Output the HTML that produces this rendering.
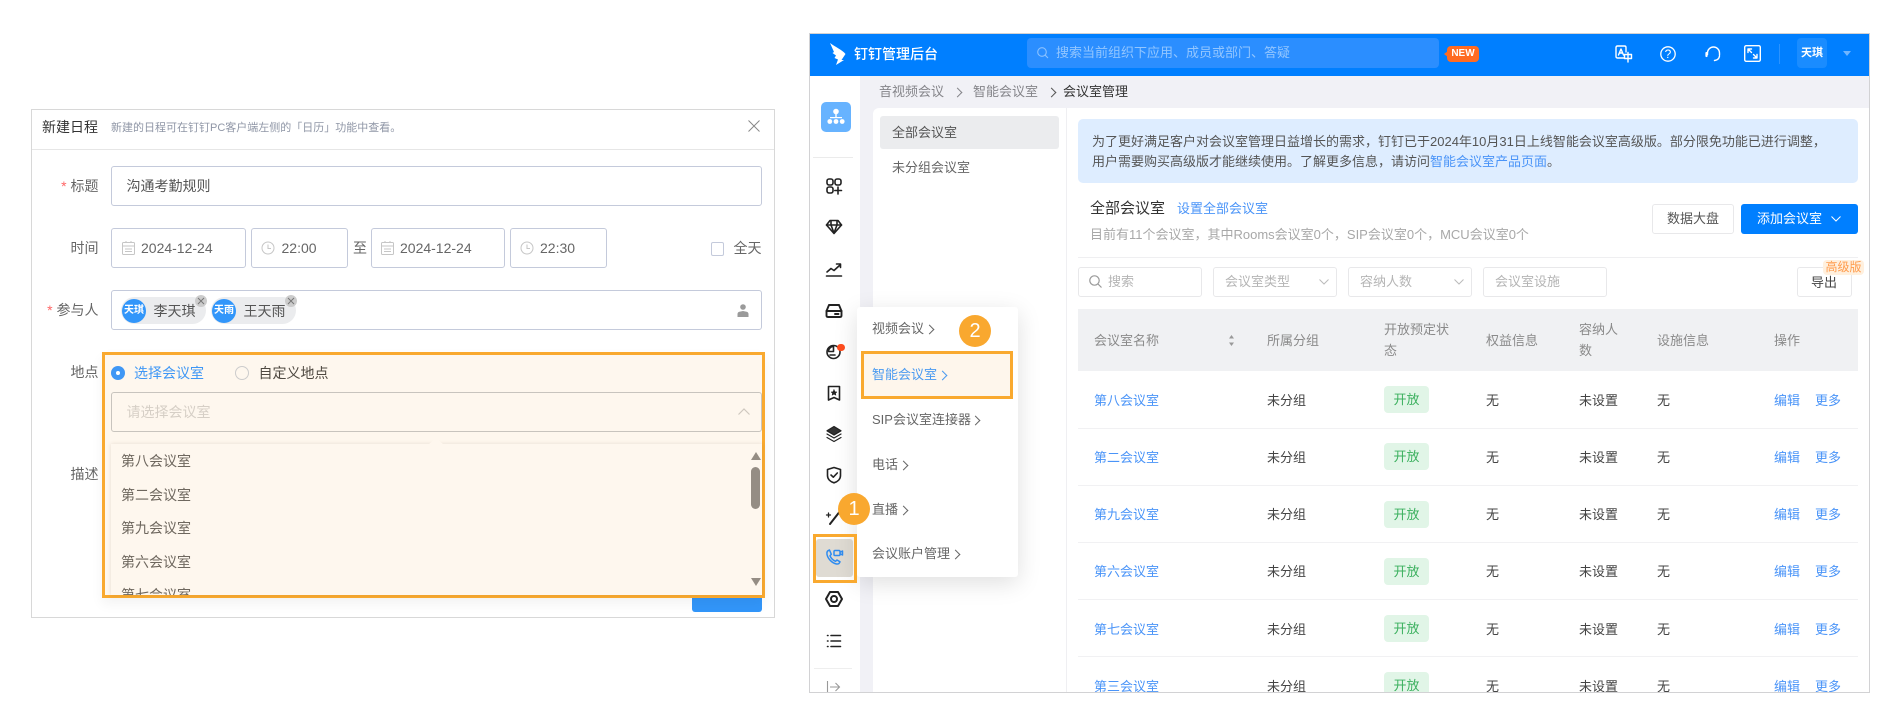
<!DOCTYPE html>
<html lang="zh-CN"><head><meta charset="utf-8"><title>会议室管理</title>
<style>
*{box-sizing:border-box;margin:0;padding:0}
html,body{width:1895px;height:727px;background:#fff;overflow:hidden}
body{position:relative;font-family:"Liberation Sans","Noto Sans CJK SC",sans-serif;font-size:13px;color:#555}
#r{position:absolute;left:0;top:0;width:1895px;height:727px;filter:blur(.35px)}
.a{position:absolute}
.t{position:absolute;white-space:nowrap;line-height:20px;height:20px}
.f14{font-size:14px}
.box{position:absolute;border:1px solid #c4cadb;border-radius:3px;background:#fff}
.c{position:absolute;width:7px;height:7px;border:solid #666;border-width:1.3px 1.3px 0 0;transform:rotate(45deg)}
.fl{position:absolute;top:267px;height:30px;border:1px solid #e8e8ea;border-radius:3px;background:#fff}
svg{position:absolute;overflow:visible}
.i{fill:none;stroke:#222;stroke-width:1.6;stroke-linejoin:round;stroke-linecap:round}
.w{fill:none;stroke:#fff;stroke-width:1.4;stroke-linejoin:round;stroke-linecap:round}
.ln{color:#4a94f8}
.tag{position:absolute;left:1384px;width:45px;height:27px;background:#e1f5e7;border-radius:4px;color:#3bb05e;text-align:center;line-height:27px}
.sep{position:absolute;left:1078px;width:780px;height:1px;background:#f1f1f3}
.num{position:absolute;width:32px;height:32px;border-radius:50%;background:#f9a82f;color:#fff;text-align:center;line-height:32px;font-size:20px}
</style></head><body><div id="r">

<!-- LEFT DIALOG -->
<div class="a" style="left:31px;top:109px;width:744px;height:509px;border:1px solid #d8d8d8;background:#fff"></div>
<div class="a" style="left:32px;top:149px;width:742px;height:1px;background:#e6e6e6"></div>
<div class="t f14" style="left:42px;top:117px;color:#333">新建日程</div>
<div class="t" style="left:111px;top:118px;font-size:11px;color:#8f96a6">新建的日程可在钉钉PC客户端左侧的「日历」功能中查看。</div>
<svg style="left:748px;top:120px" width="12" height="12"><path d="M0.5 .5L11.5 11.5M11.5 .5L.5 11.5" stroke="#888" stroke-width="1" fill="none"/></svg>

<div class="t f14" style="left:60px;top:176px;width:38.500px;text-align:right;color:#666"><span style="color:#f66">*</span> 标题</div>
<div class="box" style="left:111px;top:166px;width:651px;height:40px"></div>
<div class="t f14" style="left:126.500px;top:176px;color:#555">沟通考勤规则</div>

<div class="t f14" style="left:70.500px;top:238px;color:#666">时间</div>
<div class="box" style="left:111px;top:228px;width:134.500px;height:40px"></div>
<div class="box" style="left:251px;top:228px;width:96.500px;height:40px"></div>
<div class="t f14" style="left:353px;top:238px;color:#666">至</div>
<div class="box" style="left:370.500px;top:228px;width:134px;height:40px"></div>
<div class="box" style="left:510px;top:228px;width:96.500px;height:40px"></div>
<svg style="left:121.500px;top:241px" width="13" height="14" fill="none" stroke="#c6c6c6"><rect x=".5" y="1.5" width="12" height="12" rx="1"/><path d="M.5 5h12M3 8h7M3 10.500h7M4 0v2M9 0v2"/></svg>
<svg style="left:380.500px;top:241px" width="13" height="14" fill="none" stroke="#c6c6c6"><rect x=".5" y="1.5" width="12" height="12" rx="1"/><path d="M.5 5h12M3 8h7M3 10.500h7M4 0v2M9 0v2"/></svg>
<svg style="left:261px;top:241px" width="14" height="14" fill="none" stroke="#c6c6c6"><circle cx="7" cy="7" r="6"/><path d="M7 3.500V7.500H10"/></svg>
<svg style="left:520px;top:241px" width="14" height="14" fill="none" stroke="#c6c6c6"><circle cx="7" cy="7" r="6"/><path d="M7 3.500V7.500H10"/></svg>
<div class="t f14" style="left:141px;top:238px;color:#666">2024-12-24</div>
<div class="t f14" style="left:281.500px;top:238px;color:#666">22:00</div>
<div class="t f14" style="left:400px;top:238px;color:#666">2024-12-24</div>
<div class="t f14" style="left:540px;top:238px;color:#666">22:30</div>
<div class="a" style="left:710.500px;top:242px;width:13px;height:14px;border:1px solid #c4cadb;border-radius:2px"></div>
<div class="t f14" style="left:733.500px;top:238px;color:#666">全天</div>

<div class="t f14" style="left:45px;top:300px;width:53.500px;text-align:right;color:#666"><span style="color:#f66">*</span> 参与人</div>
<div class="box" style="left:111px;top:290px;width:651px;height:40px"></div>
<div class="a" style="left:120.500px;top:297px;width:85px;height:27px;border-radius:14px;background:#ebecee"></div>
<div class="a" style="left:122px;top:299px;width:24px;height:24px;border-radius:50%;background:#3296fa;color:#fff;font-size:10px;font-weight:bold;line-height:24px;text-align:center">天琪</div>
<div class="t f14" style="left:153.500px;top:301px;color:#555">李天琪</div>
<div class="a" style="left:195px;top:295px;width:12px;height:12px;border-radius:50%;background:#ccc"></div>
<svg style="left:198px;top:298px" width="6" height="6"><path d="M0 0L6 6M6 0L0 6" stroke="#777"/></svg>
<div class="a" style="left:210.500px;top:297px;width:85px;height:27px;border-radius:14px;background:#ebecee"></div>
<div class="a" style="left:212px;top:299px;width:24px;height:24px;border-radius:50%;background:#3296fa;color:#fff;font-size:10px;font-weight:bold;line-height:24px;text-align:center">天雨</div>
<div class="t f14" style="left:243.500px;top:301px;color:#555">王天雨</div>
<div class="a" style="left:285px;top:295px;width:12px;height:12px;border-radius:50%;background:#ccc"></div>
<svg style="left:288px;top:298px" width="6" height="6"><path d="M0 0L6 6M6 0L0 6" stroke="#777"/></svg>
<svg style="left:737px;top:304px" width="12" height="13" fill="#9a9a9a"><circle cx="6" cy="3" r="2.800"/><path d="M0.500 13V10Q.5 8 3 7.600L6 7 9 7.600Q11.500 8 11.500 10V13Z"/></svg>

<div class="t f14" style="left:70.500px;top:362px;color:#666">地点</div>
<div class="t f14" style="left:70.500px;top:464px;color:#666">描述</div>

<!-- blue button peek -->
<div class="a" style="left:692px;top:590px;width:70px;height:22px;background:#3296fa;border-radius:3px"></div>

<!-- highlighted box -->
<div class="a" style="left:102px;top:352px;width:663px;height:246px;background:#fef7ee;border:3px solid #f9a92f;box-shadow:0 6px 12px rgba(0,0,0,.05)"></div>
<div class="a" style="left:111px;top:366px;width:14px;height:14px;border-radius:50%;background:#3f97f5"></div>
<div class="a" style="left:116px;top:371px;width:4px;height:4px;border-radius:50%;background:#fff"></div>
<div class="t f14" style="left:134px;top:363px;color:#3f97f5">选择会议室</div>
<div class="a" style="left:235px;top:366px;width:14px;height:14px;border-radius:50%;border:1px solid #ccc"></div>
<div class="t f14" style="left:258.500px;top:363px;color:#4e4840">自定义地点</div>
<div class="a" style="left:111px;top:392px;width:651px;height:40px;border:1px solid #c8c4be;border-radius:3px"></div>
<div class="t f14" style="left:126.500px;top:402px;color:#d6cfc6">请选择会议室</div>
<svg style="left:738px;top:408px" width="12" height="7"><path d="M.5 6.500L6 1 11.500 6.500" fill="none" stroke="#cfc8bf" stroke-width="1.200"/></svg>
<div class="a" style="left:111px;top:444px;width:651px;height:151px;background:#fef7ee;box-shadow:0 0 4px rgba(110,90,60,.16);overflow:hidden">
 <div class="t f14" style="left:10px;top:7px;color:#6e675e">第八会议室</div>
 <div class="t f14" style="left:10px;top:41px;color:#6e675e">第二会议室</div>
 <div class="t f14" style="left:10px;top:74px;color:#6e675e">第九会议室</div>
 <div class="t f14" style="left:10px;top:108px;color:#6e675e">第六会议室</div>
 <div class="t f14" style="left:10px;top:141px;color:#6e675e">第七会议室</div>
</div>
<svg style="left:428px;top:438px" width="16" height="7"><path d="M0 7L8 0 16 7Z" fill="#fef7ee"/></svg>
<svg style="left:751px;top:452px" width="10" height="8"><path d="M0 8L5 0 10 8Z" fill="#958d84"/></svg>
<div class="a" style="left:751px;top:467px;width:9px;height:42px;background:#958d84;border-radius:5px"></div>
<svg style="left:751px;top:578px" width="10" height="8"><path d="M0 0L5 8 10 0Z" fill="#958d84"/></svg>

<!-- RIGHT APP -->
<div class="a" style="left:0;top:0;width:1895px;height:727px;clip-path:inset(33px 25px 34px 809px)">
 <div class="a" style="left:809px;top:33px;width:1061px;height:660px;background:#f1f1f6"></div>
 <div class="a" style="left:809px;top:34px;width:1061px;height:42px;background:#007fff"></div>
 <svg style="left:0;top:0" width="1" height="1"><path d="M830 43C835 47 842 49.500 845.500 54L841.500 60H844L836 65L838 59.500L834.500 58L836 55.500L832.500 53L834 52Z" fill="#fff"/></svg>
 <div class="t" style="left:854px;top:44px;font-size:14px;font-weight:500;color:#fff">钉钉管理后台</div>
 <div class="a" style="left:1027px;top:38px;width:412px;height:30px;background:#2b8eff;border-radius:4px"></div>
 <svg style="left:1037px;top:47px" width="12" height="12"><circle cx="5" cy="5" r="4.300" fill="none" stroke="#8cc2ff" stroke-width="1.100"/><path d="M8.200 8.200L11 11" stroke="#8cc2ff" stroke-width="1.100"/></svg>
 <div class="t" style="left:1056px;top:43px;color:#93c6ff">搜索当前组织下应用、成员或部门、答疑</div>
 <div class="a" style="left:1447px;top:46px;width:32px;height:16px;border-radius:4px;background:#ff6b22;color:#fff;font-size:10px;font-weight:bold;text-align:center;line-height:16px">NEW</div>
 <svg style="left:1444px;top:51px" width="4" height="6"><path d="M4 0L0 3 4 6Z" fill="#ff6b22"/></svg>

 <!-- header icons -->
 <svg style="left:1615px;top:45px" width="18" height="18" class="w"><path d="M9 13H2.500Q1 13 1 11.500V2.500Q1 1 2.500 1H9.500Q11 1 11 2.500V7"/><path d="M3.500 10L6 4 8.500 10M4.500 8H7.500"/><rect x="9.500" y="9.500" width="7" height="4"/><path d="M13 7.500V17"/></svg>
 <svg style="left:1660px;top:46px" width="16" height="16"><circle cx="8" cy="8" r="7.200" fill="none" stroke="#fff" stroke-width="1.300"/></svg>
 <div class="t" style="left:1660px;top:44px;width:16px;text-align:center;color:#fff;font-size:12px">?</div>
 <svg style="left:1705px;top:46px" width="17" height="16" class="w"><path d="M2.500 8.500V7A6 6 0 0 1 14.500 7V9"/><path d="M1.500 7V10" stroke-width="2.200"/><path d="M14.500 10Q14 14 9.500 14.500"/></svg>
 <svg style="left:1744px;top:45px" width="17" height="17" class="w"><rect x=".7" y=".7" width="15.600" height="15.600" rx="1.500"/><path d="M4 4H7.500M4 4V7.500M4 4L7.500 7.500M13 13H9.500M13 13V9.500M13 13L9.500 9.500"/></svg>
 <div class="a" style="left:1779px;top:44px;width:1px;height:20px;background:#2b93ff"></div>
 <div class="a" style="left:1797px;top:38px;width:30px;height:30px;border-radius:4px;background:#1a8cff;color:#fff;font-size:11px;font-weight:bold;text-align:center;line-height:30px">天琪</div>
 <svg style="left:1843px;top:51px" width="8" height="5"><path d="M0 0H8L4 5Z" fill="#70b5ff"/></svg>

 <!-- breadcrumb -->
 <div class="t" style="left:879px;top:82px;color:#85858a">音视频会议</div>
 <div class="c" style="left:954px;top:88.500px;border-color:#85858a"></div>
 <div class="t" style="left:973px;top:82px;color:#85858a">智能会议室</div>
 <div class="c" style="left:1048px;top:88.500px;border-color:#555"></div>
 <div class="t" style="left:1063px;top:82px;color:#333">会议室管理</div>

 <!-- sidebar -->
 <div class="a" style="left:810px;top:76px;width:50px;height:617px;background:#fff"></div>
 <div class="a" style="left:821px;top:102px;width:30px;height:30px;border-radius:5px;background:#67b3ff"></div>
 <svg style="left:826px;top:107px" width="20" height="20" fill="#fff"><circle cx="10" cy="4.500" r="2.800"/><rect x="9.300" y="6" width="1.400" height="5"/><rect x="4" y="10" width="12" height="1.200"/><circle cx="3.800" cy="14.500" r="2.400"/><circle cx="10" cy="14.500" r="2.400"/><circle cx="16.200" cy="14.500" r="2.400"/></svg>
 <div class="a" style="left:813px;top:157px;width:40px;height:1px;background:#ebebeb"></div>

 <svg style="left:823.500px;top:176px" width="20" height="20" class="i"><rect x="3" y="3" width="6" height="6" rx="2"/><rect x="11" y="3" width="6" height="6" rx="2"/><rect x="3" y="11" width="6" height="6" rx="2"/><path d="M14 11V18M10.800 14.500H17.500"/></svg>
 <svg style="left:823.500px;top:217px" width="20" height="20" class="i"><path d="M6 3.500H14L17.500 8 10 16.500 2.500 8Z"/><path d="M2.500 8H17.500M7 8L10 16M13 8L10 16M7 4L7 8M13 4L13 8"/></svg>
 <svg style="left:823.500px;top:259px" width="20" height="20" class="i"><path d="M3 13L7 9.500 10 11.500 16 6M12.500 5H16.500V8.500"/><path d="M2.500 17H17.500"/></svg>
 <svg style="left:823.500px;top:301px" width="20" height="20" class="i" stroke-width="2"><path d="M5 4H15L17.500 10V14.500Q17.500 16 16 16H4Q2.500 16 2.500 14.500V10Z" style="stroke-width:1.900"/><path d="M2.500 10H17.500M11 13H14.500" style="stroke-width:1.900"/></svg>
 <svg style="left:823.500px;top:341px" width="20" height="20" class="i"><circle cx="9.500" cy="11" r="6.500"/><path d="M9.500 5.500A5 5 0 0 0 4.500 10.500H9.500ZM6 14H11"/></svg>
 <div class="a" style="left:837px;top:343.500px;width:7.500px;height:7.500px;border-radius:50%;background:#ff4d1f"></div>
 <svg style="left:823.500px;top:383px" width="20" height="20" class="i"><path d="M4.500 3.500H15.500V17L10 14.500 4.500 17Z"/><path d="M10 6.500L11 8.800 13 9 11.500 10.300 12 12.300 10 11.200 8 12.300 8.500 10.300 7 9 9 8.800Z" fill="#222" stroke-width=".5"/></svg>
 <svg style="left:823.500px;top:424px" width="20" height="20" class="i"><path d="M10 2.500L17 6.800 10 11 3 6.800Z" fill="#333" style="stroke-width:1.200"/><path d="M3 10L10 14 17 10M3 13.500L10 17.500 17 13.500" style="stroke-width:1.200"/></svg>
 <svg style="left:823.500px;top:465px" width="20" height="20" class="i"><path d="M10 2.500L16.500 4.500V10.500C16.500 14.300 13.500 16.800 10 17.800 6.500 16.800 3.500 14.300 3.500 10.500V4.500Z"/><path d="M7 10L9.300 12.200 13.300 8"/></svg>
 <svg style="left:823.500px;top:506px" width="20" height="20" class="i"><path d="M6 18L15 6.500" stroke-width="2"/><path d="M2.500 9H6.500M4.500 7V11" stroke-width="1.300"/></svg>

 <!-- list panel -->
 <div class="a" style="left:873px;top:108px;width:996px;height:585px;background:#fff;border-radius:6px 0 0 0"></div>
 <div class="a" style="left:1066px;top:108px;width:1px;height:585px;background:#efeff2"></div>
 <div class="a" style="left:880px;top:116px;width:179px;height:33px;background:#ebecee;border-radius:3px"></div>
 <div class="t" style="left:892px;top:123px;color:#555">全部会议室</div>
 <div class="t" style="left:892px;top:158px;color:#666">未分组会议室</div>

 <!-- alert -->
 <div class="a" style="left:1078px;top:119px;width:780px;height:64px;background:#deedff;border-radius:5px"></div>
 <div class="t" style="left:1092px;top:132px;color:#555">为了更好满足客户对会议室管理日益增长的需求，钉钉已于2024年10月31日上线智能会议室高级版。部分限免功能已进行调整，</div>
 <div class="t" style="left:1092px;top:152px;color:#555">用户需要购买高级版才能继续使用。了解更多信息，请访问<span class="ln">智能会议室产品页面</span>。</div>

 <div class="t" style="left:1090px;top:199px;font-size:15px;color:#333">全部会议室</div>
 <div class="t ln" style="left:1177px;top:199px">设置全部会议室</div>
 <div class="t" style="left:1090px;top:225px;color:#a8a8a8">目前有11个会议室，其中Rooms会议室0个，SIP会议室0个，MCU会议室0个</div>
 <div class="a" style="left:1652px;top:204px;width:82px;height:30px;border:1px solid #e8e8ea;border-radius:3px;background:#fff;text-align:center;line-height:28px;color:#555">数据大盘</div>
 <div class="a" style="left:1741px;top:204px;width:117px;height:30px;border-radius:3px;background:#007fff"></div>
 <div class="t" style="left:1757px;top:209px;color:#fff">添加会议室</div>
 <svg style="left:1831px;top:216px" width="10" height="6"><path d="M.5 .5L5 5 9.500 .5" fill="none" stroke="#fff" stroke-width="1"/></svg>
 <div class="a" style="left:1078px;top:257px;width:780px;height:1px;background:#efeff1"></div>

 <!-- filters -->
 <div class="fl" style="left:1078px;width:124px"></div>
 <div class="fl" style="left:1213px;width:124px"></div>
 <div class="fl" style="left:1348px;width:124px"></div>
 <div class="fl" style="left:1483px;width:124px"></div>
 <div class="fl" style="left:1797px;width:55px"></div>
 <svg style="left:1089px;top:275px" width="13" height="13"><circle cx="5.500" cy="5.500" r="4.700" fill="none" stroke="#999" stroke-width="1.200"/><path d="M9 9L12.500 12.500" stroke="#999" stroke-width="1.200"/></svg>
 <div class="t" style="left:1108px;top:272px;color:#b5b5b5">搜索</div>
 <div class="t" style="left:1225px;top:272px;color:#b5b5b5">会议室类型</div>
 <svg style="left:1319px;top:279px" width="10" height="6"><path d="M.5 .5L5 5 9.500 .5" fill="none" stroke="#bbb"/></svg>
 <div class="t" style="left:1360px;top:272px;color:#b5b5b5">容纳人数</div>
 <svg style="left:1454px;top:279px" width="10" height="6"><path d="M.5 .5L5 5 9.500 .5" fill="none" stroke="#bbb"/></svg>
 <div class="t" style="left:1495px;top:272px;color:#b5b5b5">会议室设施</div>
 <div class="t" style="left:1811px;top:273px;color:#444">导出</div>
 <div class="a" style="left:1823px;top:260px;width:41px;height:15px;border-radius:4px;background:#fff0de;color:#ff9c4d;font-size:12px;line-height:15px;text-align:center">高级版</div>

 <!-- table head -->
 <div class="a" style="left:1078px;top:309px;width:780px;height:62px;background:#f0f1f3"></div>
 <div class="t" style="left:1094px;top:331px;color:#8a8a8a">会议室名称</div>
 <svg style="left:1229px;top:335px" width="5" height="11" fill="#999"><path d="M2.500 0L5 3.500H0ZM2.500 11L5 7.500H0Z"/></svg>
 <div class="t" style="left:1267px;top:331px;color:#8a8a8a">所属分组</div>
 <div class="t" style="left:1384px;top:320px;color:#8a8a8a">开放预定状</div>
 <div class="t" style="left:1384px;top:341px;color:#8a8a8a">态</div>
 <div class="t" style="left:1486px;top:331px;color:#8a8a8a">权益信息</div>
 <div class="t" style="left:1579px;top:320px;color:#8a8a8a">容纳人</div>
 <div class="t" style="left:1579px;top:341px;color:#8a8a8a">数</div>
 <div class="t" style="left:1657px;top:331px;color:#8a8a8a">设施信息</div>
 <div class="t" style="left:1774px;top:331px;color:#8a8a8a">操作</div>

 <!-- rows -->
 <div class="t ln" style="left:1094px;top:391px">第八会议室</div><div class="t" style="left:1267px;top:391px;color:#444">未分组</div><div class="tag" style="top:386px">开放</div><div class="t" style="left:1486px;top:391px;color:#444">无</div><div class="t" style="left:1579px;top:391px;color:#444">未设置</div><div class="t" style="left:1657px;top:391px;color:#444">无</div><div class="t ln" style="left:1774px;top:391px">编辑</div><div class="t ln" style="left:1815px;top:391px">更多</div><div class="sep" style="top:428px"></div>
 <div class="t ln" style="left:1094px;top:448px">第二会议室</div><div class="t" style="left:1267px;top:448px;color:#444">未分组</div><div class="tag" style="top:443px">开放</div><div class="t" style="left:1486px;top:448px;color:#444">无</div><div class="t" style="left:1579px;top:448px;color:#444">未设置</div><div class="t" style="left:1657px;top:448px;color:#444">无</div><div class="t ln" style="left:1774px;top:448px">编辑</div><div class="t ln" style="left:1815px;top:448px">更多</div><div class="sep" style="top:485px"></div>
 <div class="t ln" style="left:1094px;top:505px">第九会议室</div><div class="t" style="left:1267px;top:505px;color:#444">未分组</div><div class="tag" style="top:501px">开放</div><div class="t" style="left:1486px;top:505px;color:#444">无</div><div class="t" style="left:1579px;top:505px;color:#444">未设置</div><div class="t" style="left:1657px;top:505px;color:#444">无</div><div class="t ln" style="left:1774px;top:505px">编辑</div><div class="t ln" style="left:1815px;top:505px">更多</div><div class="sep" style="top:542px"></div>
 <div class="t ln" style="left:1094px;top:562px">第六会议室</div><div class="t" style="left:1267px;top:562px;color:#444">未分组</div><div class="tag" style="top:558px">开放</div><div class="t" style="left:1486px;top:562px;color:#444">无</div><div class="t" style="left:1579px;top:562px;color:#444">未设置</div><div class="t" style="left:1657px;top:562px;color:#444">无</div><div class="t ln" style="left:1774px;top:562px">编辑</div><div class="t ln" style="left:1815px;top:562px">更多</div><div class="sep" style="top:599px"></div>
 <div class="t ln" style="left:1094px;top:620px">第七会议室</div><div class="t" style="left:1267px;top:620px;color:#444">未分组</div><div class="tag" style="top:615px">开放</div><div class="t" style="left:1486px;top:620px;color:#444">无</div><div class="t" style="left:1579px;top:620px;color:#444">未设置</div><div class="t" style="left:1657px;top:620px;color:#444">无</div><div class="t ln" style="left:1774px;top:620px">编辑</div><div class="t ln" style="left:1815px;top:620px">更多</div><div class="sep" style="top:656px"></div>
 <div class="t ln" style="left:1094px;top:677px">第三会议室</div><div class="t" style="left:1267px;top:677px;color:#444">未分组</div><div class="tag" style="top:672px">开放</div><div class="t" style="left:1486px;top:677px;color:#444">无</div><div class="t" style="left:1579px;top:677px;color:#444">未设置</div><div class="t" style="left:1657px;top:677px;color:#444">无</div><div class="t ln" style="left:1774px;top:677px">编辑</div><div class="t ln" style="left:1815px;top:677px">更多</div>

 <!-- remaining sidebar -->
 <div class="a" style="left:816px;top:539px;width:37px;height:38px;border-radius:3px;background:#dfdbd3"></div>
 <svg style="left:823.500px;top:547px" width="20" height="20" fill="none" stroke="#2f8cf0" stroke-width="1.500" stroke-linecap="round" stroke-linejoin="round"><path d="M5.500 3C3.500 3.500 2.500 5 3 7.500 4 12 8 16 12.500 17 14.500 17.300 15.500 16.300 16 14.800L13 13 11.500 14.300C9 13.300 7 11.200 6 8.800L7.300 7.300Z"/><rect x="10" y="3.500" width="6" height="5" rx="1"/><path d="M16.500 5L18.500 4V8L16.500 7"/></svg>
 <svg style="left:823.500px;top:589px" width="20" height="20" class="i"><path d="M6 3H14L18 10 14 17H6L2 10Z" style="stroke-width:2"/><circle cx="10" cy="10" r="3" style="stroke-width:2"/></svg>
 <svg style="left:823.500px;top:631px" width="20" height="20" class="i"><path d="M7 4.500H16.500M7 10H16.500M7 15.500H16.500M3.500 4.500H4M3.500 10H4M3.500 15.500H4"/></svg>
 <div class="a" style="left:814px;top:668px;width:38px;height:1px;background:#eee"></div>
 <svg style="left:823.500px;top:677px" width="20" height="20" fill="none" stroke="#999" stroke-width="1.100"><path d="M3.500 4V16M6 10H15.500M11.500 6L15.500 10 11.500 14"/></svg>

 <!-- fly-out menu -->
 <div class="a" style="left:857px;top:307px;width:161px;height:270px;background:#fff;border-radius:3px;box-shadow:0 6px 24px rgba(0,0,0,.13)"></div>
 <div class="t" style="left:872px;top:319px;color:#666">视频会议</div><div class="c" style="left:926px;top:325.500px"></div>
 <div class="a" style="left:861px;top:351px;width:152px;height:48px;background:#fef6ec;border:3px solid #f9a92f"></div>
 <div class="t" style="left:872px;top:365px;color:#4a9af0">智能会议室</div><div class="c" style="left:939px;top:371.500px;border-color:#4a9af0"></div>
 <div class="t" style="left:872px;top:410px;color:#666">SIP会议室连接器</div><div class="c" style="left:972px;top:416.500px"></div>
 <div class="t" style="left:872px;top:455px;color:#666">电话</div><div class="c" style="left:900px;top:461.500px"></div>
 <div class="t" style="left:872px;top:500px;color:#666">直播</div><div class="c" style="left:900px;top:506.500px"></div>
 <div class="t" style="left:872px;top:544px;color:#666">会议账户管理</div><div class="c" style="left:952px;top:550.500px"></div>
 <div class="a" style="left:813px;top:534px;width:44px;height:49px;border:3px solid #f9a92f"></div>
 <div class="num" style="left:959px;top:315px">2</div>
 <div class="num" style="left:838px;top:493px">1</div>
</div>
<!-- app frame -->
<div class="a" style="left:809px;top:33px;width:1061px;height:660px;border:1px solid #d2d2d4;pointer-events:none"></div>
</div></body></html>
